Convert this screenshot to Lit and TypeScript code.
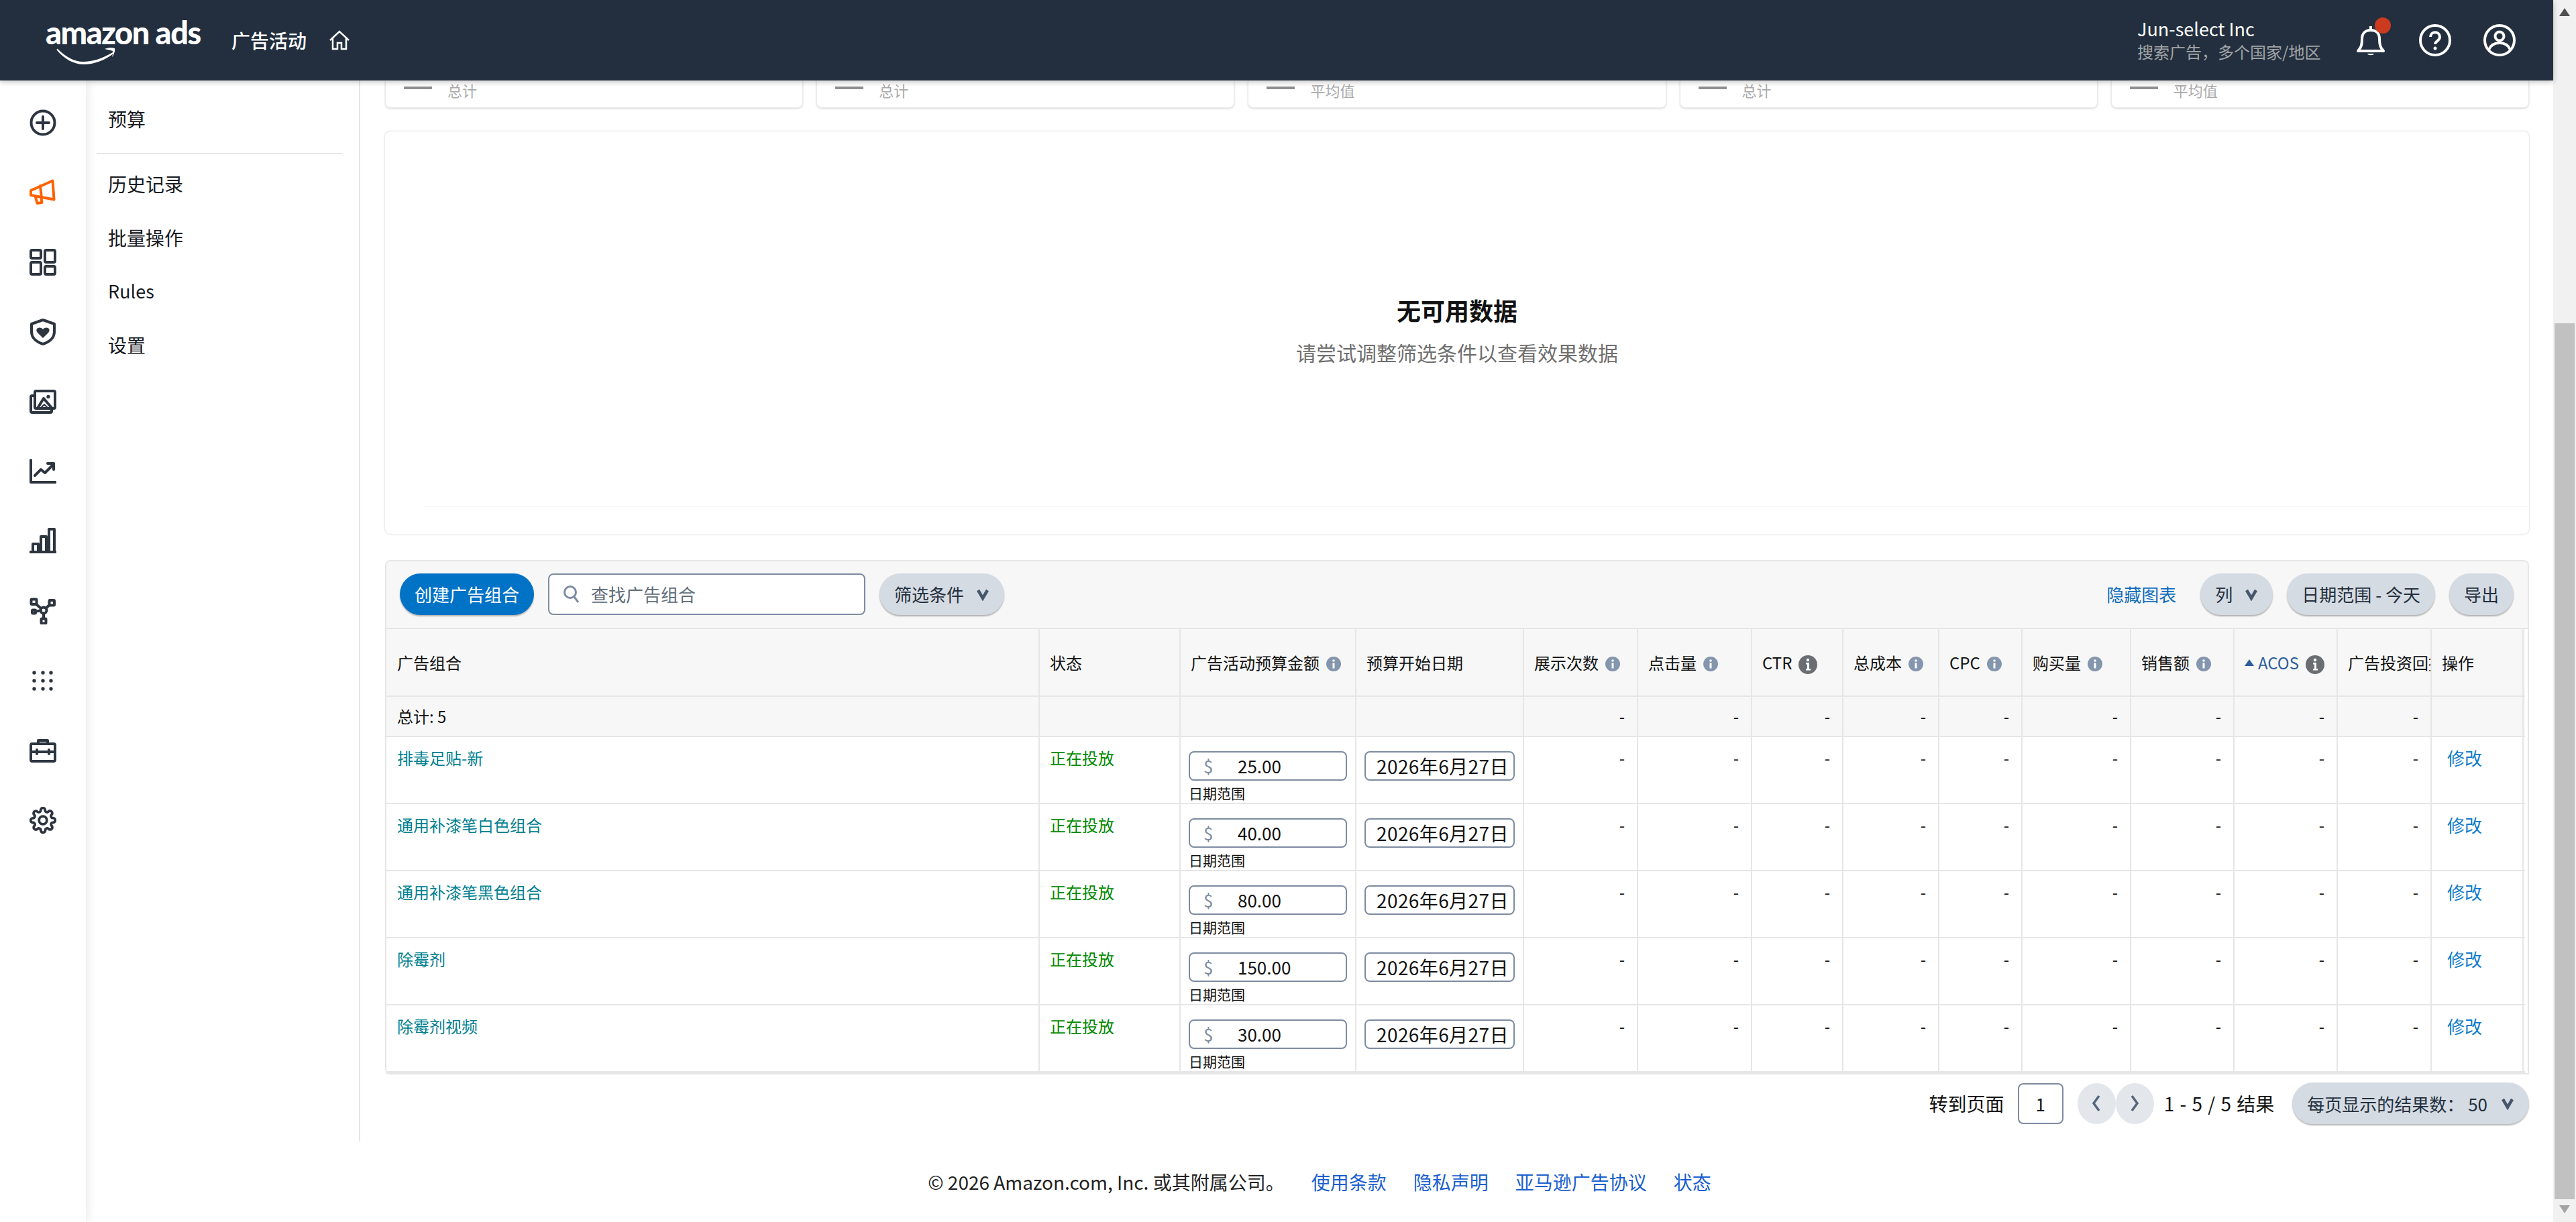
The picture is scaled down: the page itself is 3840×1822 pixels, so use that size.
import { LitElement, html, css, svg } from 'lit';
import { customElement } from 'lit/decorators.js';

const COLUMNS = '972px 210px 262px 250px 170px 170px 136px 143px 124px 162px 154px 154px 140px 139px';

const rows = [
  { name: '排毒足贴-新', budget: '25.00' },
  { name: '通用补漆笔白色组合', budget: '40.00' },
  { name: '通用补漆笔黑色组合', budget: '80.00' },
  { name: '除霉剂', budget: '150.00' },
  { name: '除霉剂视频', budget: '30.00' },
];

const metricLabels = ['总计', '总计', '平均值', '总计', '平均值'];

// rail icons, all drawn on a 40x40 box
const railIcons = [
  svg`<circle cx="20" cy="20" r="17.5"/><path d="M20 11v18M11 20h18"/>`,
  svg`<g stroke="#ff6200"><path d="M34.500 2.500 2 17v7l34.500 6.500zM16 10l2 19"/><path d="M9 27l2.500 9 7-1-1-6"/></g>`,
  svg`<rect x="2" y="2" width="15" height="12" rx="2"/><rect x="2" y="20" width="15" height="18" rx="2"/><rect x="23" y="2" width="15" height="18" rx="2"/><rect x="23" y="26" width="15" height="12" rx="2"/>`,
  svg`<path d="M20 2 37 8v12c0 9-8 15-17 18C11 35 3 29 3 20V8z"/><path class="solid" d="M20 29l-8.500-8.500c-4-5 3-10 8.500-4.500 5.500-5.500 12.500-.5 8.500 4.500z"/>`,
  svg`<rect x="8" y="4" width="30" height="26" rx="2"/><path d="M8 11H4a2 2 0 0 0-2 2v21a2 2 0 0 0 2 2h27a2 2 0 0 0 2-2v-4"/><path d="M13 28l8-13 12 14"/><path d="M17 29l5-5 5 5z" stroke-width="2"/><circle class="solid" cx="28" cy="12.500" r="2.700"/>`,
  svg`<path d="M2 3v33h37"/><path d="M8 26l9-9 6 5 12-12"/><path d="M27 8h9v9"/>`,
  svg`<path d="M1 36h38"/><rect x="5" y="24" width="8" height="12"/><rect x="17" y="13" width="8" height="23"/><rect x="29" y="2" width="8" height="34"/>`,
  svg`<circle cx="21" cy="19" r="4.500"/><rect x="2.500" y="2.500" width="8" height="7.500" rx="1"/><rect x="29.500" y="4" width="7.500" height="7.500" rx="1"/><rect x="4" y="18.500" width="5" height="5" rx="1"/><rect x="17.500" y="31.500" width="7" height="7" rx="1"/><path d="M10 10l7 6M29.500 11l-5 5M9 20.500l7.500-1M21 24v7"/>`,
  svg`<g class="solid"><circle cx="7" cy="8" r="2.700"/><circle cx="20" cy="8" r="2.700"/><circle cx="32" cy="8" r="2.700"/><circle cx="7" cy="20" r="2.700"/><circle cx="20" cy="20" r="2.700"/><circle cx="32" cy="20" r="2.700"/><circle cx="7" cy="32" r="2.700"/><circle cx="20" cy="32" r="2.700"/><circle cx="32" cy="32" r="2.700"/></g>`,
  svg`<rect x="2" y="10" width="36" height="26" rx="2"/><path d="M13 10V5h14v5M2 22h36M11 19v6M29 19v6"/>`,
  svg`<g transform="scale(1.667)" stroke-width="2.300"><circle cx="12" cy="12" r="3.500"/><path d="M19.400 15a1.650 1.650 0 0 0 .33 1.820l.06.06a2 2 0 0 1 0 2.830 2 2 0 0 1-2.830 0l-.06-.06a1.650 1.650 0 0 0-1.820-.33 1.650 1.650 0 0 0-1 1.510V21a2 2 0 0 1-2 2 2 2 0 0 1-2-2v-.09A1.650 1.650 0 0 0 9 19.400a1.650 1.650 0 0 0-1.820.33l-.06.06a2 2 0 0 1-2.830 0 2 2 0 0 1 0-2.830l.06-.06a1.650 1.650 0 0 0 .33-1.820 1.650 1.650 0 0 0-1.510-1H3a2 2 0 0 1-2-2 2 2 0 0 1 2-2h.09A1.650 1.650 0 0 0 4.600 9a1.650 1.650 0 0 0-.33-1.820l-.06-.06a2 2 0 0 1 0-2.830 2 2 0 0 1 2.830 0l.06.06a1.650 1.650 0 0 0 1.820.33H9a1.650 1.650 0 0 0 1-1.510V3a2 2 0 0 1 2-2 2 2 0 0 1 2 2v.09a1.650 1.650 0 0 0 1 1.510 1.650 1.650 0 0 0 1.820-.33l.06-.06a2 2 0 0 1 2.830 0 2 2 0 0 1 0 2.830l-.06.06a1.650 1.650 0 0 0-.33 1.820V9a1.650 1.650 0 0 0 1.510 1H21a2 2 0 0 1 2 2 2 2 0 0 1-2 2h-.09a1.650 1.650 0 0 0-1.510 1z"/></g>`,
];

const chevron = html`<svg class="chevron" viewBox="0 0 20 20"><path d="M3 4l7 12 7-12"/></svg>`;

const info = html`<svg class="info" viewBox="0 0 22 22"><circle cx="11" cy="11" r="11" fill="#8496ad"/><rect x="9.500" y="9.500" width="3" height="8" fill="#fff"/><circle cx="11" cy="6" r="1.800" fill="#fff"/></svg>`;

const infoDark = html`<svg class="info dark" viewBox="0 0 28 28"><circle cx="14" cy="14" r="14" fill="#6a6e73"/><path d="M11 11h5v9h2v2.500h-7V20h2v-6.500h-2z" fill="#fff"/><circle cx="14" cy="7" r="2.200" fill="#fff"/></svg>`;

@customElement('app-root')
export class AppRoot extends LitElement {
  static override styles = css`
    :host {
      display: flex;
      width: 3840px;
      height: 1822px;
      overflow: hidden;
      background: #fff;
      color: #111;
      font-family: "Noto Sans CJK SC", "Noto Sans", sans-serif;
      font-size: 26px;
    }

    .page {
      width: 3806px;
      display: flex;
      flex-direction: column;
    }

    /* top bar */
    .topbar {
      height: 120px;
      flex: none;
      background: #232f3e;
      color: #fff;
      display: flex;
      align-items: center;
      box-shadow: 0 2px 8px rgba(0, 0, 0, .25);
      position: relative;
      z-index: 2;
    }
    .logo {
      width: 231px;
      margin-left: 68px;
      height: 60px;
      position: relative;
      top: -8px;
      font-family: Lato, sans-serif;
      font-weight: 900;
      font-size: 47px;
      line-height: 52px;
      letter-spacing: -1.500px;
      white-space: nowrap;
    }
    .logo svg {
      position: absolute;
      left: 16px;
      top: 46px;
      width: 92px;
      height: 28px;
    }
    .section {
      margin-left: 46px;
      font-size: 28px;
      font-weight: 500;
    }
    .home {
      width: 32px;
      height: 30px;
      margin-left: 33px;
      fill: none;
      stroke: #fff;
      stroke-width: 2.500;
    }
    .account {
      margin-left: auto;
      width: 274px;
      line-height: 34px;
    }
    .account-name { font-size: 27px; }
    .account-sub { font-size: 24px; color: #a0a4a9; white-space: nowrap; }
    .top-icons {
      display: flex;
      align-items: center;
      margin: 0 56px 0 50px;
      gap: 48px;
    }
    .top-icon {
      width: 48px;
      height: 48px;
      fill: none;
      stroke: #fff;
      stroke-width: 4;
      display: block;
    }
    .bell { position: relative; }
    .dot {
      position: absolute;
      top: -10px;
      left: 30px;
      width: 24px;
      height: 24px;
      border-radius: 50%;
      background: #cc3a1f;
    }

    /* body */
    .body {
      flex: 1;
      display: flex;
      min-height: 0;
    }
    .rail {
      width: 128px;
      flex: none;
      padding-top: 11px;
      box-sizing: border-box;
      background: #fff;
      box-shadow: 0 0 16px rgba(0, 0, 0, .12);
      position: relative;
      z-index: 1;
    }
    .rail-item {
      height: 104px;
      display: flex;
      align-items: center;
      justify-content: center;
    }
    .rail-item svg {
      width: 40px;
      height: 40px;
      fill: none;
      stroke: #2d3540;
      stroke-width: 4;
      stroke-linejoin: round;
      stroke-linecap: round;
    }
    .rail-item .solid { fill: #2d3540; stroke: none; }

    .workspace {
      flex: 1;
      display: flex;
      flex-direction: column;
      min-width: 0;
    }
    .upper {
      height: 1582px;
      display: flex;
    }
    .subnav {
      width: 409px;
      flex: none;
      box-sizing: border-box;
      border-right: 2px solid #e6e6e6;
      padding: 18px 25px 0 16px;
      font-size: 28px;
      color: #16191f;
    }
    .subnav-item {
      height: 80px;
      line-height: 78px;
      padding-left: 17px;
    }
    .subnav-item.latin { font-size: 27px; }
    .subnav hr {
      border: none;
      height: 2px;
      background: #e6e6e6;
      margin: 10px 0 5px;
    }

    .content {
      flex: 1;
      min-width: 0;
      padding: 0 36px 0 37px;
    }

    .metrics {
      display: grid;
      grid-template-columns: repeat(5, 1fr);
      gap: 20px;
    }
    .metric {
      height: 41px;
      box-sizing: border-box;
      background: #fff;
      border: 1px solid #e9e9e9;
      border-top: none;
      border-radius: 0 0 8px 8px;
      box-shadow: 0 1px 3px rgba(0, 0, 0, .16);
      padding-left: 27px;
      display: flex;
      gap: 23px;
      font-size: 22px;
      color: #aaa;
      line-height: 28px;
    }
    .metric i {
      width: 42px;
      height: 4px;
      margin-top: 9px;
      background: #8f8f8f;
    }

    .empty {
      margin-top: 35px;
      height: 600px;
      border-radius: 8px;
      box-shadow: 0 0 3px rgba(0, 0, 0, .22);
      display: flex;
      flex-direction: column;
      align-items: center;
      position: relative;
    }
    .empty b {
      margin-top: 241px;
      font-size: 36px;
      line-height: 50px;
      font-weight: 700;
    }
    .empty span {
      margin-top: 18px;
      font-size: 30px;
      line-height: 40px;
      color: #6f6f6f;
    }
    .axis {
      position: absolute;
      left: 60px;
      right: 0;
      bottom: 40px;
      height: 1px;
      background: #f5f5f5;
    }

    /* table card */
    .card {
      margin-top: 39px;
      border: 2px solid #e6e6e6;
      border-radius: 8px 8px 0 8px;
      box-sizing: border-box;
      height: 767px;
    }
    .toolbar {
      height: 101px;
      box-sizing: border-box;
      background: #f7f7f7;
      border-bottom: 2px solid #e6e6e6;
      border-radius: 6px 6px 0 0;
      padding: 0 21px 2px 20px;
      display: flex;
      align-items: center;
      gap: 21px;
    }
    .btn {
      height: 62px;
      border-radius: 31px;
      padding: 0 22px;
      background: #d5dbe2;
      color: #232f3e;
      display: flex;
      align-items: center;
      gap: 18px;
      box-shadow: 0 2px 2px rgba(0, 0, 0, .28);
      white-space: nowrap;
      box-sizing: border-box;
    }
    .btn.primary {
      background: #0073c7;
      color: #fff;
    }
    .chevron {
      width: 20px;
      height: 20px;
      fill: none;
      stroke: #46566c;
      stroke-width: 4.500;
      flex: none;
    }
    .search {
      width: 473px;
      height: 62px;
      box-sizing: border-box;
      border: 2px solid #7d8ba1;
      border-radius: 8px;
      background: #fff;
      display: flex;
      align-items: center;
      gap: 16px;
      padding-left: 20px;
      color: #5f6b7a;
    }
    .search svg {
      width: 26px;
      height: 28px;
      fill: none;
      stroke: #7d8ba1;
      stroke-width: 3;
    }
    .link { color: #0f6cbd; }
    .hide-chart { margin-left: auto; margin-right: 15px; }

    .row {
      display: grid;
      grid-template-columns: ${css([COLUMNS] as unknown as TemplateStringsArray)};
      height: 100px;
      box-sizing: border-box;
      border-bottom: 2px solid #e6e6e6;
      width: 3188px;
      font-size: 24px;
      line-height: 34px;
    }
    .row.head {
      height: 101px;
      background: #f7f7f7;
    }
    .row.total {
      height: 60px;
      background: #f7f7f7;
    }
    .row.last {
      border-bottom-width: 4px;
      height: 102px;
    }
    .cell {
      border-left: 2px solid #e6e6e6;
      padding: 14px 15px 0;
      box-sizing: border-box;
      white-space: nowrap;
      min-width: 0;
    }
    .cell:first-child { border-left: none; padding-left: 16px; }
    .cell:last-child { border-right: 2px solid #e6e6e6; }
    .head .cell {
      padding-top: 0;
      display: flex;
      align-items: center;
      gap: 10px;
      overflow: hidden;
    }
    .total .cell { padding-top: 12px; }
    .num {
      text-align: right;
      padding-right: 18px;
    }
    .info {
      width: 22px;
      height: 22px;
      flex: none;
      margin-top: 4px;
    }
    .info.dark { width: 28px; height: 28px; margin-top: 6px; }
    .sorted { color: #2c5f9c; display: flex; align-items: center; gap: 6px; }
    .sorted i {
      width: 0;
      height: 0;
      border-left: 7px solid transparent;
      border-right: 7px solid transparent;
      border-bottom: 10px solid #2c5f9c;
    }
    .name { color: #00808f; }
    .status { color: #008a00; }
    .edit { color: #0f7bc9; font-size: 26px; padding-left: 23px; }
    .input-cell { padding: 21px 12px 0; }
    .field {
      height: 44px;
      box-sizing: border-box;
      border: 2px solid #7d8ba1;
      border-radius: 8px;
      background: #fff;
      display: flex;
      align-items: center;
      font-size: 26px;
      line-height: 40px;
    }
    .field u {
      text-decoration: none;
      color: #7d8ba1;
      width: 71px;
      padding-left: 20px;
      box-sizing: border-box;
      flex: none;
    }
    .date { font-size: 28px; padding-left: 16px; letter-spacing: .4px; }
    .hint {
      font-size: 21px;
      line-height: 30px;
      margin-top: 3px;
    }

    /* pager */
    .pager {
      margin-top: 12px;
      display: flex;
      align-items: center;
      justify-content: flex-end;
      font-size: 28px;
    }
    .page-input {
      width: 68px;
      height: 61px;
      box-sizing: border-box;
      border: 2px solid #7d8ba1;
      border-radius: 8px;
      margin: 0 21px 0 20px;
      display: flex;
      align-items: center;
      justify-content: center;
      font-size: 26px;
    }
    .round {
      width: 57px;
      height: 61px;
      border-radius: 50%;
      background: #e3e7ec;
      display: flex;
      align-items: center;
      justify-content: center;
    }
    .round svg {
      width: 16px;
      height: 26px;
      fill: none;
      stroke: #56657a;
      stroke-width: 3.500;
    }
    .result { margin: 0 27px 0 15px; word-spacing: 2px; }
    .per-page { font-size: 26px; gap: 20px; height: 62px; }

    /* footer */
    .footer {
      flex: 1;
      display: flex;
      align-items: center;
      justify-content: center;
      gap: 40px;
      font-size: 28px;
      color: #222;
    }
    .footer a { color: #1a5fcf; }

    /* scrollbar */
    .scrollbar {
      width: 34px;
      flex: none;
      background: #f1f1f1;
      display: flex;
      flex-direction: column;
      align-items: center;
    }
    .arrow-up, .arrow-down {
      width: 0;
      height: 0;
      border-left: 8px solid transparent;
      border-right: 8px solid transparent;
    }
    .arrow-up { margin-top: 12px; border-bottom: 12px solid #505050; }
    .thumb {
      width: 30px;
      height: 1306px;
      margin: 458px 0 9px;
      background: #c1c1c1;
    }
    .arrow-down { border-top: 12px solid #a3a3a3; }
  `;

  private renderHeaderCell(label: unknown, icon: unknown = null) {
    return html`<div class="cell">${label}${icon}</div>`;
  }

  private renderRow(row: { name: string; budget: string }, last: boolean) {
    return html`
      <div class="row ${last ? 'last' : ''}">
        <div class="cell name">${row.name}</div>
        <div class="cell status">正在投放</div>
        <div class="cell input-cell">
          <div class="field"><u>$</u>${row.budget}</div>
          <div class="hint">日期范围</div>
        </div>
        <div class="cell input-cell"><div class="field date">2026年6月27日</div></div>
        ${[0, 1, 2, 3, 4, 5, 6, 7, 8].map(() => html`<div class="cell num">-</div>`)}
        <div class="cell edit">修改</div>
      </div>
    `;
  }

  override render() {
    return html`
      <div class="page">
        <header class="topbar">
          <div class="logo">amazon ads
            <svg viewBox="0 0 92 28"><path d="M2 5C14 17 27 24 40 24c14 0 29-5 44-14 2-1 3 1 1 2C72 22 56 28 41 28 26 28 12 20 1 7c-1-1 0-3 1-2z" fill="#fff"/><path d="M72 5c5-2 12-2 15-1 1 3-1 10-4 13 1-4 2-7 1-9-3-1-8-2-12-3z" fill="#fff"/></svg>
          </div>
          <div class="section">广告活动</div>
          <svg class="home" viewBox="0 0 32 30"><path d="M2 15 16 2l14 13M6 12v16h7v-9h6v9h7V12"/></svg>
          <div class="account">
            <div class="account-name">Jun-select Inc</div>
            <div class="account-sub">搜索广告，多个国家/地区</div>
          </div>
          <div class="top-icons">
            <div class="bell">
              <svg class="top-icon" viewBox="0 0 48 48"><path d="M5 40c5-5 6-10 6-18 0-8 5-13 13-13s13 5 13 13c0 8 1 13 6 18z" stroke-linejoin="round"/><path d="M24 3v5"/><path d="M19 44c1 3 9 3 10 0z" fill="#fff" stroke="none"/></svg>
              <div class="dot"></div>
            </div>
            <svg class="top-icon" viewBox="0 0 48 48"><circle cx="24" cy="24" r="22"/><path d="M17 19c0-9 14-9 14 0 0 6-7 6-7 11"/><circle cx="24" cy="36" r="2.500" fill="#fff" stroke="none"/></svg>
            <svg class="top-icon" viewBox="0 0 48 48"><circle cx="24" cy="24" r="22"/><circle cx="24" cy="18" r="6.500"/><path d="M8 38c3-7 9-10 16-10s13 3 16 10"/></svg>
          </div>
        </header>
        <div class="body">
          <nav class="rail">
            ${railIcons.map((icon) => html`<div class="rail-item"><svg viewBox="0 0 40 40">${icon}</svg></div>`)}
          </nav>
          <div class="workspace">
            <div class="upper">
              <aside class="subnav">
                <div class="subnav-item">预算</div>
                <hr />
                <div class="subnav-item">历史记录</div>
                <div class="subnav-item">批量操作</div>
                <div class="subnav-item latin">Rules</div>
                <div class="subnav-item">设置</div>
              </aside>
              <main class="content">
                <div class="metrics">
                  ${metricLabels.map((label) => html`<div class="metric"><i></i>${label}</div>`)}
                </div>
                <div class="empty">
                  <b>无可用数据</b>
                  <span>请尝试调整筛选条件以查看效果数据</span>
                  <div class="axis"></div>
                </div>
                <section class="card">
                  <div class="toolbar">
                    <div class="btn primary">创建广告组合</div>
                    <div class="search">
                      <svg viewBox="0 0 26 28"><circle cx="11" cy="11" r="8.500"/><path d="M17 18l6 8"/></svg>
                      查找广告组合
                    </div>
                    <div class="btn">筛选条件${chevron}</div>
                    <div class="link hide-chart">隐藏图表</div>
                    <div class="btn">列${chevron}</div>
                    <div class="btn">日期范围 - 今天</div>
                    <div class="btn">导出</div>
                  </div>
                  <div class="row head">
                    ${this.renderHeaderCell('广告组合')}
                    ${this.renderHeaderCell('状态')}
                    ${this.renderHeaderCell('广告活动预算金额', info)}
                    ${this.renderHeaderCell('预算开始日期')}
                    ${this.renderHeaderCell('展示次数', info)}
                    ${this.renderHeaderCell('点击量', info)}
                    ${this.renderHeaderCell('CTR', infoDark)}
                    ${this.renderHeaderCell('总成本', info)}
                    ${this.renderHeaderCell('CPC', info)}
                    ${this.renderHeaderCell('购买量', info)}
                    ${this.renderHeaderCell('销售额', info)}
                    ${this.renderHeaderCell(html`<span class="sorted"><i></i>ACOS</span>`, infoDark)}
                    ${this.renderHeaderCell('广告投资回报率')}
                    ${this.renderHeaderCell('操作')}
                  </div>
                  <div class="row total">
                    <div class="cell">总计: 5</div>
                    <div class="cell"></div>
                    <div class="cell"></div>
                    <div class="cell"></div>
                    ${[0, 1, 2, 3, 4, 5, 6, 7, 8].map(() => html`<div class="cell num">-</div>`)}
                    <div class="cell"></div>
                  </div>
                  ${rows.map((row, i) => this.renderRow(row, i === rows.length - 1))}
                </section>
                <div class="pager">
                  转到页面
                  <div class="page-input">1</div>
                  <div class="round"><svg viewBox="0 0 16 26"><path d="M12 2 4 13l8 11"/></svg></div>
                  <div class="round"><svg viewBox="0 0 16 26"><path d="M4 2l8 11-8 11"/></svg></div>
                  <div class="result">1 - 5 / 5 结果</div>
                  <div class="btn per-page">每页显示的结果数： 50${chevron}</div>
                </div>
              </main>
            </div>
            <footer class="footer">
              <span>© 2026 Amazon.com, Inc. 或其附属公司。</span>
              <a>使用条款</a>
              <a>隐私声明</a>
              <a>亚马逊广告协议</a>
              <a>状态</a>
            </footer>
          </div>
        </div>
      </div>
      <div class="scrollbar">
        <div class="arrow-up"></div>
        <div class="thumb"></div>
        <div class="arrow-down"></div>
      </div>
    `;
  }
}
